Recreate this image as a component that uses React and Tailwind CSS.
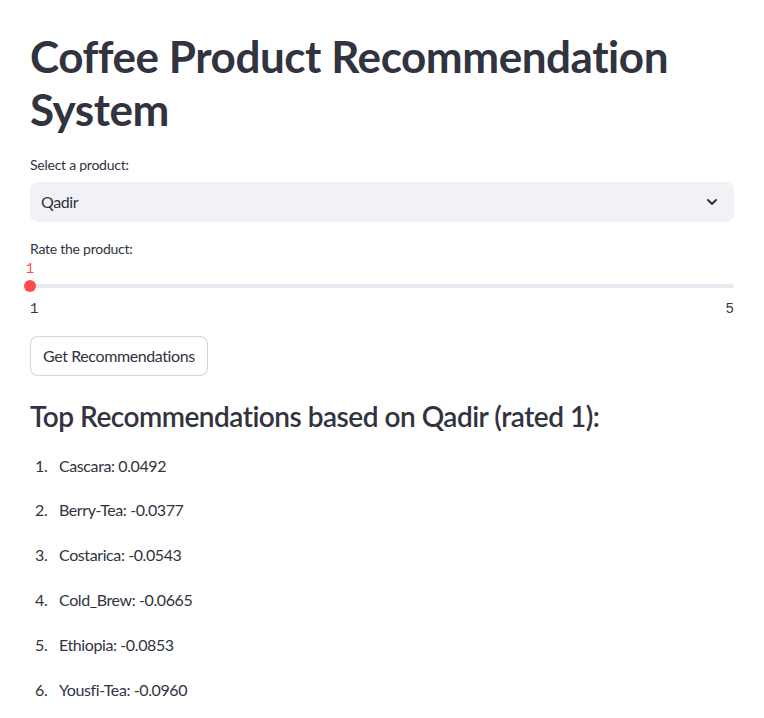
import React from 'react';

const recs = [
  ['Cascara', '0.0492'],
  ['Berry-Tea', '-0.0377'],
  ['Costarica', '-0.0543'],
  ['Cold_Brew', '-0.0665'],
  ['Ethiopia', '-0.0853'],
  ['Yousfi-Tea', '-0.0960'],
];

const App = () => {
  return (
    <div className="min-h-screen bg-white px-[30px] text-[#31333f] font-['Lato','Liberation_Sans',sans-serif]">
      <h1 className="pt-[30px] text-[44px] font-bold leading-[52.8px] tracking-[-0.45px]">
        Coffee Product Recommendation System
      </h1>

      {/* product select */}
      <label className="mt-[19px] block text-[14px] leading-[20px] tracking-[-0.25px]">Select a product:</label>
      <div className="mt-[7px] flex h-[40px] items-center justify-between rounded-lg bg-[#f0f2f6] pl-[11px] pr-[14px]">
        <span className="text-[16px] tracking-[-0.4px]">Qadir</span>
        <svg width="16" height="16" viewBox="0 0 24 24" fill="none" stroke="#31333f" strokeWidth="3" strokeLinecap="round" strokeLinejoin="round">
          <path d="M6 9l6 6 6-6" />
        </svg>
      </div>

      {/* rating slider */}
      <label className="mt-[17px] block text-[14px] leading-[20px] tracking-[-0.25px]">Rate the product:</label>
      <div className="-ml-[6px] h-[20px] w-[12px] text-center font-['Liberation_Mono',monospace] text-[14px] leading-[20px] text-[#ff4b4b]">1</div>
      <div className="relative flex h-[14px] items-center">
        <div className="h-[4px] w-full rounded bg-[#e6eaf1]" />
        <div className="absolute -left-[6px] top-[1px] h-[12px] w-[12px] rounded-full bg-[#ff4b4b]" />
      </div>
      <div className="mt-[6px] flex justify-between font-['Liberation_Mono',monospace] text-[14px] leading-[20px]">
        <span>1</span>
        <span>5</span>
      </div>

      <button className="mt-[17px] h-[40px] rounded-lg border border-[#31333f33] bg-white px-[12px] text-[16px] tracking-[-0.4px]">
        Get Recommendations
      </button>

      <h3 className="mt-[24px] text-[28px] font-semibold leading-[33.6px] tracking-[-0.5px]">
        Top Recommendations based on Qadir (rated 1):
      </h3>

      <ol className="mt-[10px]">
        {recs.map(([name, score], i) => (
          <li key={name} className="flex h-[44.8px] items-center text-[16px] tracking-[-0.4px]">
            <span className="ml-[5px] w-[24px] shrink-0">{i + 1}.</span>
            <span>{name}: {score}</span>
          </li>
        ))}
      </ol>
    </div>
  );
};

export default App;
